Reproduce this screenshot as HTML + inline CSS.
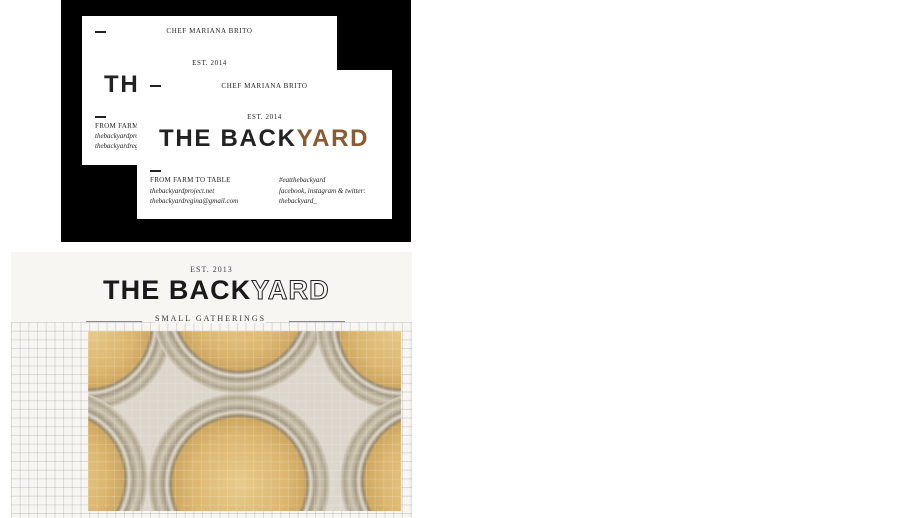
<!DOCTYPE html>
<html><head><style>
*{margin:0;padding:0;box-sizing:border-box}
html,body{width:900px;height:518px;overflow:hidden}
body{background:#fff;position:relative;font-family:"Liberation Serif",serif}
.blk{position:absolute;left:61px;top:0;width:350px;height:242px;background:#000}
.card{position:absolute;width:255px;height:149px;background:#fff;overflow:hidden;color:#222}
.dash{position:absolute;width:11px;height:1.5px;background:#222}
.sc{position:absolute;font-size:7px;letter-spacing:.6px;text-align:center;width:100%}
.logo{position:absolute;font-family:"Liberation Sans",sans-serif;font-weight:bold;white-space:nowrap}
.it{position:absolute;font-style:italic;font-size:7px;line-height:10px;white-space:nowrap}
.sm{position:absolute;font-size:7px;letter-spacing:.3px;white-space:nowrap}
.panel{position:absolute;left:11px;top:252px;width:401px;height:266px;background:#f7f6f2}
.grid{position:absolute;left:11px;top:322px;width:401px;height:196px;
background-image:linear-gradient(rgba(140,140,140,.28) 1px,transparent 1px),linear-gradient(90deg,rgba(140,140,140,.28) 1px,transparent 1px);background-size:8.7px 8.7px}
.photo{position:absolute;left:88px;top:331px;width:313px;height:180px;overflow:hidden;background:#dcd6cc}
.jar{position:absolute;border-radius:50%;background:radial-gradient(circle closest-side,#e9cb8c 0,#dbb66f 55%,#cfa862 72%,#9a8a6c 75%,#ddd6c6 79%,#a49a86 83%,#cfc6b2 89%,#b0a690 95%,#d8d0c0 100%)}
.ov{position:absolute;left:88px;top:331px;width:313px;height:180px;
background-image:linear-gradient(rgba(255,255,255,.15) 1px,transparent 1px),linear-gradient(90deg,rgba(255,255,255,.15) 1px,transparent 1px);background-size:8.7px 8.7px}
</style></head><body>
<div class="blk"></div>
<div class="card" style="left:82px;top:16px">
  <div class="dash" style="left:13px;top:15px"></div>
  <div class="sc" style="top:11px">CHEF MARIANA BRITO</div>
  <div class="sc" style="top:43px">EST. 2014</div>
  <div class="logo" style="left:22px;top:55px;font-size:24px;letter-spacing:1.7px">THE BACKYARD</div>
  <div class="dash" style="left:13px;top:100px"></div>
  <div class="sm" style="left:13px;top:106px">FROM FARM TO TABLE</div>
  <div class="it" style="left:13px;top:115px">thebackyardproject.net</div>
  <div class="it" style="left:13px;top:125px">thebackyardregina@gmail.com</div>
</div>
<div class="card" style="left:137px;top:70px">
  <div class="dash" style="left:13px;top:15px"></div>
  <div class="sc" style="top:12px">CHEF MARIANA BRITO</div>
  <div class="sc" style="top:43px">EST. 2014</div>
  <div class="logo" style="left:22px;top:55px;font-size:24px;letter-spacing:1.7px">THE BACK<span style="color:#8a5a30">YARD</span></div>
  <div class="dash" style="left:13px;top:100px"></div>
  <div class="sm" style="left:13px;top:106px">FROM FARM TO TABLE</div>
  <div class="it" style="left:13px;top:116px">thebackyardproject.net</div>
  <div class="it" style="left:13px;top:126px">thebackyardregina@gmail.com</div>
  <div class="it" style="left:142px;top:105px">#eatthebackyard</div>
  <div class="it" style="left:142px;top:116px">facebook, instagram &amp; twitter:</div>
  <div class="it" style="left:142px;top:126px">thebackyard_</div>
</div>
<div class="panel">
  <div class="sc" style="top:13px;font-size:8px;letter-spacing:1px;color:#444">EST. 2013</div>
  <div class="logo" style="left:92px;top:23px;font-size:27px;letter-spacing:1.1px;color:#1a1a1a">THE BACK<span style="color:#f7f6f2;-webkit-text-stroke:1px #222">YARD</span></div>
</div>
<div class="grid"></div>
<div style="position:absolute;left:86px;top:321px;width:56px;height:1px;background:#888"></div>
<div style="position:absolute;left:289px;top:321px;width:56px;height:1px;background:#888"></div>
<div class="sm" style="left:155px;top:314px;font-size:8px;letter-spacing:2px;color:#333;background:#f7f6f2">SMALL GATHERINGS</div>
<div class="photo">
  <div class="jar" style="left:-85px;top:-90px;width:170px;height:170px"></div>
  <div class="jar" style="left:63px;top:-113px;width:176px;height:176px"></div>
  <div class="jar" style="left:228px;top:-90px;width:170px;height:170px"></div>
  <div class="jar" style="left:-120px;top:58px;width:180px;height:180px"></div>
  <div class="jar" style="left:60px;top:62px;width:182px;height:182px"></div>
  <div class="jar" style="left:252px;top:60px;width:180px;height:180px"></div>
</div>
<div class="ov"></div>
</body></html>
